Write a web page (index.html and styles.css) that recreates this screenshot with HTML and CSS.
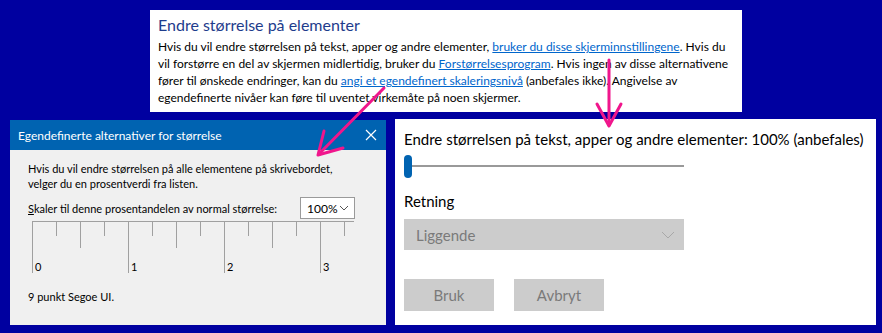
FILE: index.html
```html
<!DOCTYPE html>
<html lang="no">
<head>
    <meta charset="UTF-8">
    <meta name="viewport" content="width=device-width, initial-scale=1.0">
    <title>Endre størrelse på elementer</title>
    <link rel="stylesheet" href="styles.css">
</head>
<body>
    <div class="page">
        <div class="top-panel">
            <h1>Endre størrelse på elementer</h1>
            <p>Hvis du vil endre størrelsen på tekst, apper og andre elementer, <a href="#">bruker du disse skjerminnstillingene</a>. Hvis du<br>
            vil forstørre en del av skjermen midlertidig, bruker du <a href="#">Forstørrelsesprogram</a>. Hvis ingen av disse alternativene<br>
            fører til ønskede endringer, kan du <a href="#">angi et egendefinert skaleringsnivå</a> (anbefales ikke). Angivelse av<br>
            egendefinerte nivåer kan føre til uventet virkemåte på noen skjermer.</p>
        </div>

        <div class="bottom-row">
            <div class="dialog">
                <div class="dialog-title">
                    <span>Egendefinerte alternativer for størrelse</span>
                    <svg class="close" width="12" height="12" viewBox="0 0 12 12">
                        <path d="M1 1 L11 11 M11 1 L1 11" stroke="#fff" stroke-width="1.2" fill="none"/>
                    </svg>
                </div>
                <div class="dialog-body">
                    <p class="intro">Hvis du vil endre størrelsen på alle elementene på skrivebordet,<br>velger du en prosentverdi fra listen.</p>
                    <div class="scale-row">
                        <span><u>S</u>kaler til denne prosentandelen av normal størrelse:</span>
                        <div class="percent-select">
                            <span>100%</span>
                            <svg width="10" height="6" viewBox="0 0 10 6">
                                <path d="M1 1 L5 5 L9 1" stroke="#555" stroke-width="1" fill="none"/>
                            </svg>
                        </div>
                    </div>
                    <div class="ruler">
                        <svg width="324" height="54" viewBox="0 0 324 54">
                            <g stroke="#a0a0a0" stroke-width="1">
                                <path d="M0 0.5 H322"/>
                                <path d="M0.5 0 V52 M96.5 0 V52 M192.5 0 V52 M288.5 0 V52"/>
                                <path d="M24.5 0 V15 M72.5 0 V15 M120.5 0 V15 M168.5 0 V15 M216.5 0 V15 M264.5 0 V15 M312.5 0 V15"/>
                                <path d="M48.5 0 V27 M144.5 0 V27 M240.5 0 V27"/>
                            </g>
                        </svg>
                        <span class="num n0">0</span>
                        <span class="num n1">1</span>
                        <span class="num n2">2</span>
                        <span class="num n3">3</span>
                    </div>
                    <p class="font-note">9 punkt Segoe UI.</p>
                </div>
            </div>

            <div class="settings">
                <div class="label">Endre størrelsen på tekst, apper og andre elementer: 100% (anbefales)</div>
                <div class="slider">
                    <div class="thumb"></div>
                    <div class="track"></div>
                </div>
                <div class="label">Retning</div>
                <div class="combo">
                    <span>Liggende</span>
                    <svg width="14" height="8" viewBox="0 0 14 8">
                        <path d="M1 1 L7 7 L13 1" stroke="#a8a8a8" stroke-width="1" fill="none"/>
                    </svg>
                </div>
                <div class="buttons">
                    <button>Bruk</button>
                    <button>Avbryt</button>
                </div>
            </div>
        </div>

        <svg class="arrows" width="882" height="333" viewBox="0 0 882 333">
            <g stroke="#f0168c" stroke-width="3" fill="none" stroke-linecap="round" stroke-linejoin="round">
                <path d="M384 88 L319 154"/>
                <path d="M324 131 L318 155 L343 148"/>
                <path d="M609 60 L609 125"/>
                <path d="M597 104 L609 126 L621 104"/>
            </g>
        </svg>
    </div>
</body>
</html>
```

FILE: styles.css
```css
body {
    margin: 0;
    background-color: #0000a0;
    font-family: "Segoe UI", Lato, "Noto Sans", Arial, sans-serif;
}

.page {
    position: relative;
    width: 882px;
    height: 333px;
    overflow: hidden;
}

/* Top explanation panel */
.top-panel {
    margin: 10px 0 0 150px;
    width: 592px;
    height: 102px;
    box-sizing: border-box;
    padding: 3px 8px 0;
    background-color: #fff;
}

.top-panel h1 {
    margin: 0;
    font-size: 16px;
    font-weight: normal;
    line-height: 24px;
    color: #1e3c8c;
}

.top-panel p {
    margin: 1px 0 0;
    font-size: 12px;
    line-height: 17px;
    color: #000;
    white-space: nowrap;
}

.top-panel a {
    color: #0066cc;
}

.bottom-row {
    display: flex;
    align-items: flex-start;
    margin-top: 7px;
}

/* Classic dialog */
.dialog {
    margin: 1px 0 0 10px;
    width: 376px;
    height: 205px;
    background-color: #f0f0f0;
}

.dialog-title {
    display: flex;
    justify-content: space-between;
    align-items: center;
    height: 30px;
    padding: 0 9px 0 8px;
    background-color: #0063b1;
    color: #fff;
    font-size: 12px;
}

.dialog-body {
    padding: 11px 0 0 18px;
    font-size: 11px;
    color: #000;
    white-space: nowrap;
}

.dialog-body .intro {
    margin: 0;
    line-height: 15px;
}

.scale-row {
    display: flex;
    align-items: center;
    justify-content: space-between;
    width: 327px;
    margin-top: 6px;
}

.percent-select {
    display: flex;
    align-items: center;
    justify-content: space-between;
    width: 55px;
    height: 22px;
    box-sizing: border-box;
    padding: 0 5px 0 6px;
    background-color: #fff;
    border: 1px solid #9a9a9a;
    font-size: 12px;
}

.ruler {
    position: relative;
    margin: 2px 0 0 4px;
    height: 54px;
}

.ruler svg {
    display: block;
}

.ruler .num {
    position: absolute;
    top: 39px;
    font-size: 11px;
}

.n0 { left: 3px; }
.n1 { left: 99px; }
.n2 { left: 195px; }
.n3 { left: 291px; }

.font-note {
    margin: 15px 0 0;
}

/* Modern settings panel */
.settings {
    margin-left: 9px;
    width: 481px;
    height: 206px;
    box-sizing: border-box;
    padding: 9px 9px 0;
    background-color: #fff;
    white-space: nowrap;
}

.settings .label {
    font-size: 15px;
    line-height: 22px;
    color: #000;
}

.slider {
    display: flex;
    align-items: center;
    height: 24px;
    width: 280px;
    margin: 4px 0 12px;
}

.thumb {
    width: 8px;
    height: 23px;
    border-radius: 4px;
    background-color: #0063b1;
}

.track {
    flex: 1;
    height: 2px;
    background-color: #999;
}

.combo {
    display: flex;
    align-items: center;
    justify-content: space-between;
    width: 280px;
    height: 31px;
    box-sizing: border-box;
    padding: 0 9px 0 12px;
    margin-top: 7px;
    background-color: #cccccc;
    color: #7a7a7a;
    font-size: 15px;
}

.buttons {
    display: flex;
    gap: 20px;
    margin-top: 29px;
}

.buttons button {
    width: 90px;
    height: 32px;
    border: none;
    background-color: #cccccc;
    color: #7a7a7a;
    font-family: inherit;
    font-size: 15px;
}

.arrows {
    position: absolute;
    top: 0;
    left: 0;
    pointer-events: none;
}
```
